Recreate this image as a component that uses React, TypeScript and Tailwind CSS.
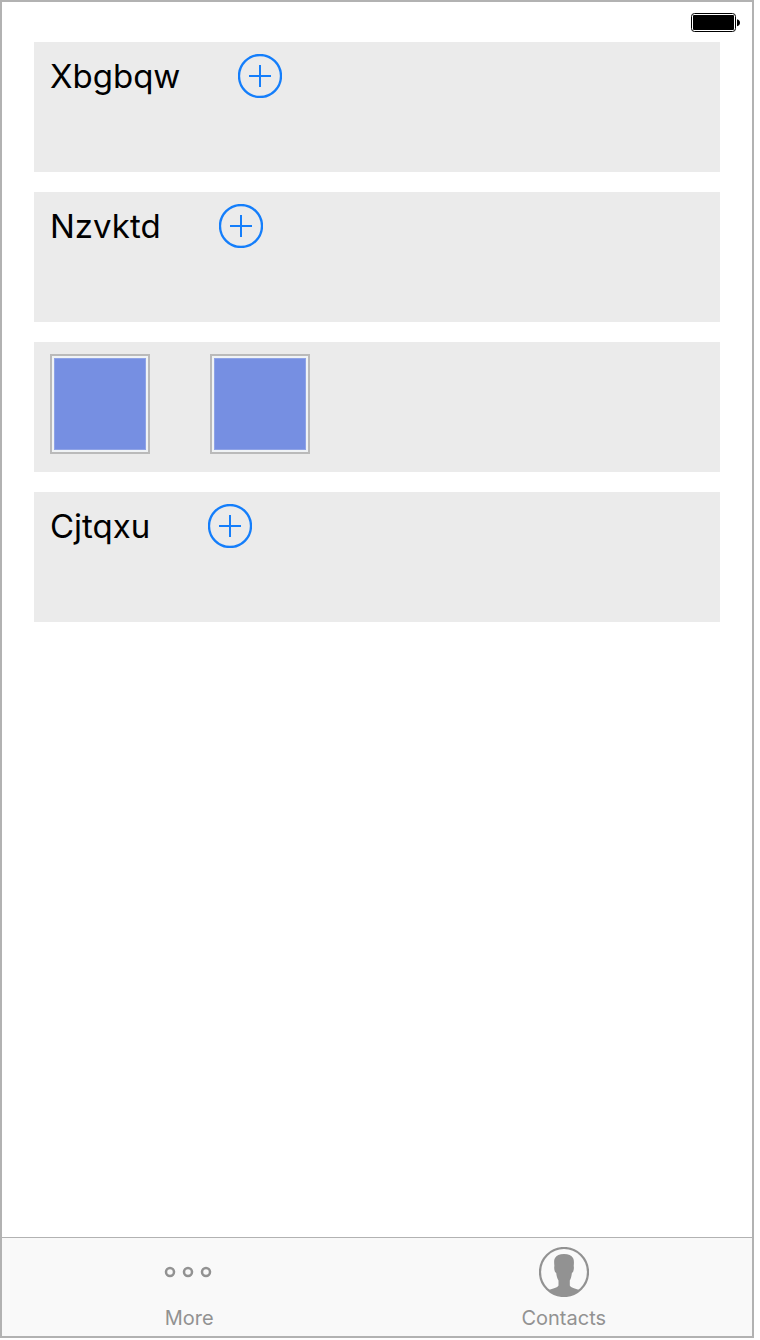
import React from "react";

function BatteryIcon() {
  return (
    <svg width="49" height="20" viewBox="0 0 49 20" role="img" aria-label="Battery full">
      <rect x="0.5" y="0.5" width="44" height="18" rx="3" fill="#fff" stroke="#000" />
      <rect x="2" y="2" width="41" height="15" rx="1" fill="#000" />
      <path d="M46 6.2c1.800.5 3 1.700 3 3.500s-1.200 3-3 3.500z" fill="#000" />
    </svg>
  );
}

function AddIcon() {
  return (
    <svg width="44" height="44" viewBox="0 0 44 44" fill="none" stroke="#147efb" strokeWidth="2" aria-hidden="true">
      <circle cx="22" cy="22" r="21" strokeWidth="2.3" />
      <path d="M22 11v22M11 22h22" />
    </svg>
  );
}

function MoreIcon() {
  return (
    <svg width="50" height="50" viewBox="0 0 50 50" fill="none" stroke="#929292" strokeWidth="2.5" aria-hidden="true">
      <circle cx="6" cy="25" r="4" />
      <circle cx="24" cy="25" r="4" />
      <circle cx="42" cy="25" r="4" />
    </svg>
  );
}

function ContactsIcon() {
  return (
    <svg width="50" height="50" viewBox="0 0 50 50" aria-hidden="true">
      <circle cx="25" cy="25" r="24" fill="none" stroke="#929292" strokeWidth="2.2" />
      <path
        d="M25 7C20.500 7 17.500 8.500 16 11C14.800 13 15.100 16 15.400 19C15 20 15.200 23 16 24.800C16.400 25.600 16.900 25.800 17.200 26C17.600 29 18.300 31.500 19.500 33.500V38.500C18.500 40.800 14 41.300 9.500 43C13.500 47.200 19 49.500 25 49.500S36.500 47.200 40.500 43C36 41.300 31.800 40.800 30.800 38.500V33.500C31.900 31.500 32.500 29 32.900 26C33.300 25.800 33.700 25.600 34.100 24.800C34.900 23 35.100 20 34.700 19C35 16 35.200 13 34 11C32.500 8.500 29.500 7 25 7Z"
        fill="#929292"
      />
    </svg>
  );
}

function LabelCard({ name }: { name: string }) {
  return (
    <li className="flex h-[130px] items-start gap-[58px] bg-[#ebebeb] px-4 py-3">
      <span className="text-[33px] leading-[44px] text-black">{name}</span>
      <button type="button" aria-label={`Add to ${name}`} className="size-11 rounded-full">
        <AddIcon />
      </button>
    </li>
  );
}

function Swatch({ label }: { label: string }) {
  return (
    <div role="img" aria-label={label} className="size-[100px] border-2 border-[#bababa] bg-[#f0f3f5] p-[2px]">
      <div className="size-full border border-[#8fa3e6] bg-[#768fe2]" />
    </div>
  );
}

function SwatchCard() {
  return (
    <li className="flex h-[130px] items-start gap-[60px] bg-[#ebebeb] px-4 py-3">
      <Swatch label="First swatch" />
      <Swatch label="Second swatch" />
    </li>
  );
}

function Tab({ label, icon }: { label: string; icon: React.ReactNode }) {
  return (
    <button type="button" className="flex flex-1 flex-col items-center gap-[9px] pt-[9px] text-[#929292]">
      {icon}
      <span className="text-[20px] leading-6">{label}</span>
    </button>
  );
}

export default function App() {
  return (
    <div className="flex min-h-screen bg-white pr-[6px] pb-[2px] font-['Inter','Liberation_Sans',sans-serif]">
      <div className="flex flex-1 flex-col border-2 border-[#b2b2b2]">
        <header className="flex h-10 items-start justify-end pt-[11px] pr-3">
          <BatteryIcon />
        </header>
        <main className="flex-1 px-8">
          <ul className="flex flex-col gap-5">
            <LabelCard name="Xbgbqw" />
            <LabelCard name="Nzvktd" />
            <SwatchCard />
            <LabelCard name="Cjtqxu" />
          </ul>
        </main>
        <nav className="flex h-[99px] border-t border-[#b2b2b2] bg-[#f9f9f9] pr-px">
          <Tab label="More" icon={<MoreIcon />} />
          <Tab label="Contacts" icon={<ContactsIcon />} />
        </nav>
      </div>
    </div>
  );
}
